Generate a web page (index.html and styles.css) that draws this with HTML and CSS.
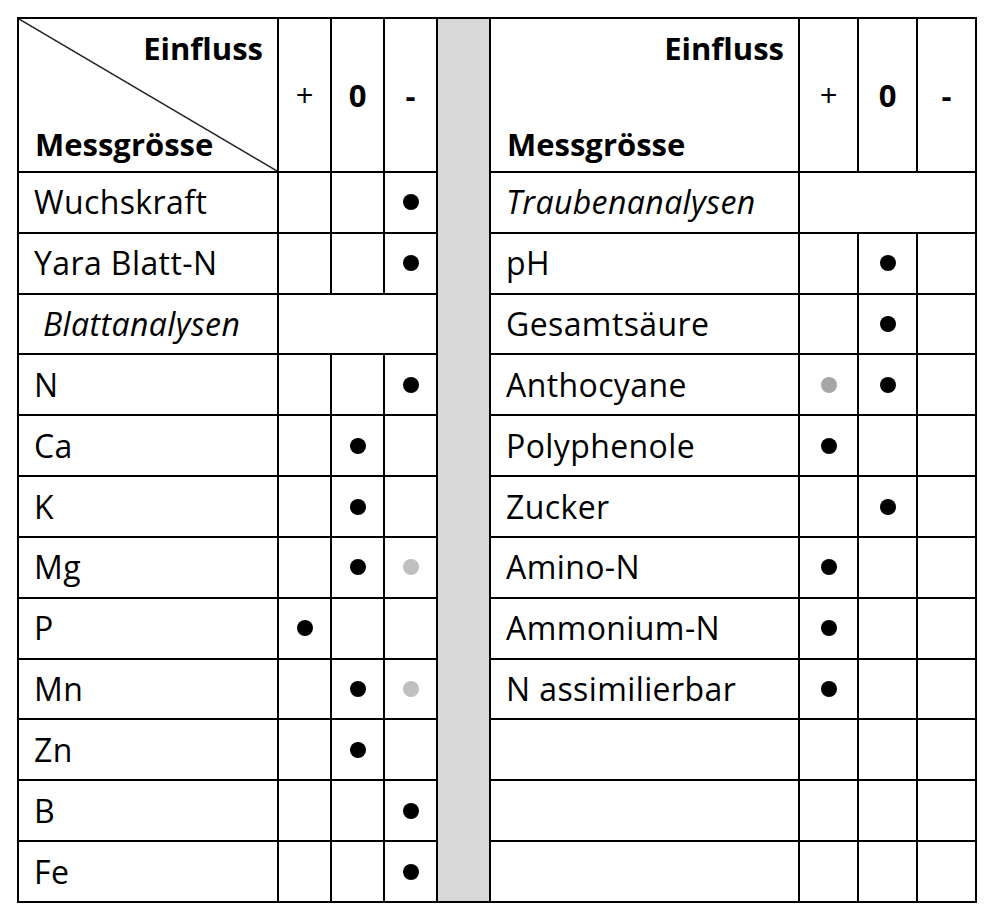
FILE: index.html
```html
<!DOCTYPE html>
<html lang="de">
<head>
<meta charset="utf-8">
<link rel="stylesheet" href="styles.css">
</head>
<body>
<table class="grid">
  <colgroup>
    <col class="c-label-l">
    <col class="c-sym-l"><col class="c-sym-l"><col class="c-sym-l">
    <col class="c-gap">
    <col class="c-label-r">
    <col class="c-sym-r"><col class="c-sym-r"><col class="c-sym-r">
  </colgroup>
  <tr class="head">
    <td class="corner diag">
      <div class="corner-in">
        <span class="einfluss">Einfluss</span>
        <span class="mess">Messgrösse</span>
      </div>
    </td>
    <td class="sym plus">+</td>
    <td class="sym">0</td>
    <td class="sym">-</td>
    <td class="gap" rowspan="13"></td>
    <td class="corner">
      <div class="corner-in">
        <span class="einfluss">Einfluss</span>
        <span class="mess">Messgrösse</span>
      </div>
    </td>
    <td class="sym plus">+</td>
    <td class="sym">0</td>
    <td class="sym">-</td>
  </tr>
  <tr>
    <td class="label">Wuchskraft</td>
    <td></td><td></td><td class="dc"><span class="dot"></span></td>
    <td class="label it">Traubenanalysen</td>
    <td colspan="3"></td>
  </tr>
  <tr>
    <td class="label">Yara Blatt-N</td>
    <td></td><td></td><td class="dc"><span class="dot"></span></td>
    <td class="label">pH</td>
    <td></td><td class="dc"><span class="dot"></span></td><td></td>
  </tr>
  <tr>
    <td class="label it ind">Blattanalysen</td>
    <td colspan="3"></td>
    <td class="label">Gesamtsäure</td>
    <td></td><td class="dc"><span class="dot"></span></td><td></td>
  </tr>
  <tr>
    <td class="label">N</td>
    <td></td><td></td><td class="dc"><span class="dot"></span></td>
    <td class="label">Anthocyane</td>
    <td class="dc"><span class="dot mid"></span></td><td class="dc"><span class="dot"></span></td><td></td>
  </tr>
  <tr>
    <td class="label">Ca</td>
    <td></td><td class="dc"><span class="dot"></span></td><td></td>
    <td class="label">Polyphenole</td>
    <td class="dc"><span class="dot"></span></td><td></td><td></td>
  </tr>
  <tr>
    <td class="label">K</td>
    <td></td><td class="dc"><span class="dot"></span></td><td></td>
    <td class="label">Zucker</td>
    <td></td><td class="dc"><span class="dot"></span></td><td></td>
  </tr>
  <tr>
    <td class="label">Mg</td>
    <td></td><td class="dc"><span class="dot"></span></td><td class="dc"><span class="dot light"></span></td>
    <td class="label">Amino-N</td>
    <td class="dc"><span class="dot"></span></td><td></td><td></td>
  </tr>
  <tr>
    <td class="label">P</td>
    <td class="dc"><span class="dot"></span></td><td></td><td></td>
    <td class="label">Ammonium-N</td>
    <td class="dc"><span class="dot"></span></td><td></td><td></td>
  </tr>
  <tr>
    <td class="label">Mn</td>
    <td></td><td class="dc"><span class="dot"></span></td><td class="dc"><span class="dot light"></span></td>
    <td class="label">N assimilierbar</td>
    <td class="dc"><span class="dot"></span></td><td></td><td></td>
  </tr>
  <tr>
    <td class="label">Zn</td>
    <td></td><td class="dc"><span class="dot"></span></td><td></td>
    <td class="label"></td>
    <td></td><td></td><td></td>
  </tr>
  <tr>
    <td class="label">B</td>
    <td></td><td></td><td class="dc"><span class="dot"></span></td>
    <td class="label"></td>
    <td></td><td></td><td></td>
  </tr>
  <tr>
    <td class="label">Fe</td>
    <td></td><td></td><td class="dc"><span class="dot"></span></td>
    <td class="label"></td>
    <td></td><td></td><td></td>
  </tr>
</table>
</body>
</html>
```
FILE: styles.css
```css
html, body {
  margin: 0;
  padding: 0;
  background: #fff;
}
body {
  padding: 17px 0 0 17px;
  font-family: "Open Sans", Lato, sans-serif;
  color: #000;
}
.grid {
  border-collapse: collapse;
  table-layout: fixed;
  width: 960px;
}
.grid td {
  border: 2px solid #000;
  padding: 0;
  font-size: 32px;
  letter-spacing: 0.4px;
  line-height: 1;
  vertical-align: middle;
}
.c-label-l { width: 260px; }
.c-sym-l { width: 53px; }
.c-gap { width: 53px; }
.c-label-r { width: 309px; }
.c-sym-r { width: 59px; }
.grid tr { height: 60.83px; }
.grid tr.head { height: 152px; }
.grid tr.head td { font-size: 31px; letter-spacing: 0; }
.corner {
  height: 152px;
}
.diag {
  background: linear-gradient(to top right, transparent calc(50% - 1.3px), #000 50%, transparent calc(50% + 1.3px));
}
.corner-in {
  display: flex;
  flex-direction: column;
  justify-content: space-between;
  height: 152px;
  padding: 14px 14px 11px 16px;
  box-sizing: border-box;
  font-weight: 700;
}
.einfluss { align-self: flex-end; }
.mess { align-self: flex-start; }
.sym {
  text-align: center;
  font-weight: 700;
}
.sym.plus { font-weight: 400; }
.gap { background: #d9d9d9; }
.label { padding-left: 15px !important; }
.label.it { font-style: italic; }
.label.ind { padding-left: 24px !important; }
.dot {
  display: block;
  margin: 0 auto;
  width: 16px;
  height: 16px;
  border-radius: 50%;
  background: #000;
}
.dot.light { background: #c0c0c0; }
.dot.mid { background: #a6a6a6; }
```
